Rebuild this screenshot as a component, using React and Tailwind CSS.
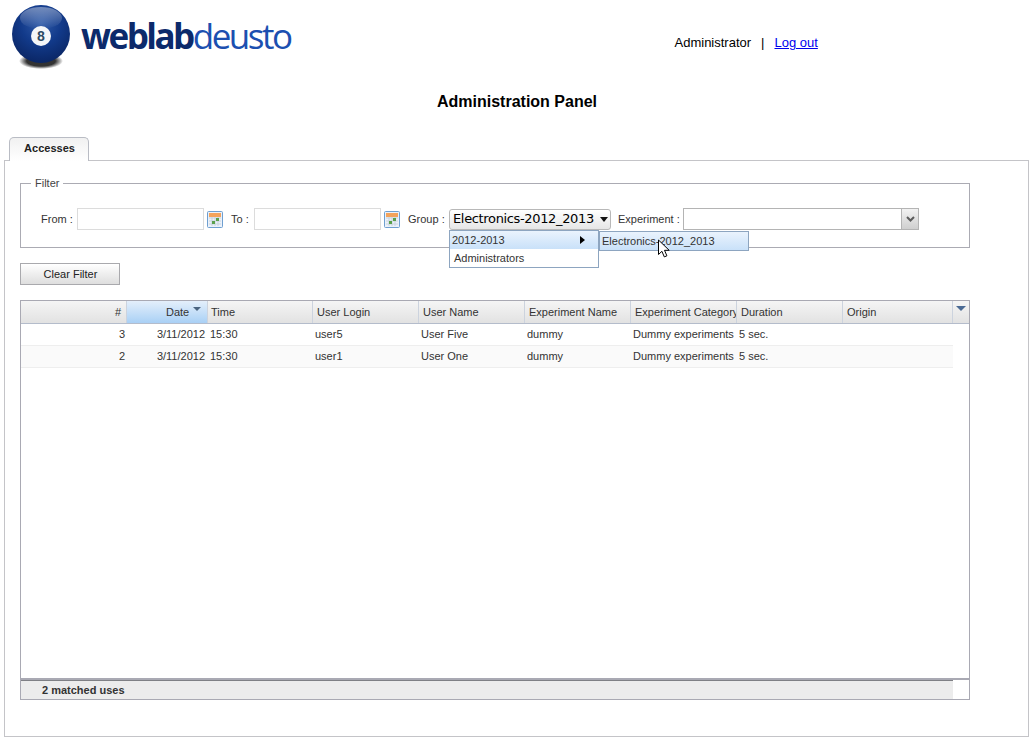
import React from "react";

const cols = "grid-cols-[106px_81px_105px_106px_106px_106px_106px_106px_110px]";

function Ball() {
  return (
    <svg width="60" height="64" viewBox="0 0 60 64" className="shrink-0">
      <defs>
        <radialGradient id="b" cx="50%" cy="32%" r="70%">
          <stop offset="0" stopColor="#2f5aa8" />
          <stop offset="0.5" stopColor="#123a8a" />
          <stop offset="1" stopColor="#0a2563" />
        </radialGradient>
        <radialGradient id="s" cx="50%" cy="50%" r="50%">
          <stop offset="0.65" stopColor="#000" stopOpacity="0.8" />
          <stop offset="1" stopColor="#000" stopOpacity="0" />
        </radialGradient>
        <linearGradient id="h" x1="0" y1="0" x2="0" y2="1">
          <stop offset="0" stopColor="#fff" stopOpacity="0.4" />
          <stop offset="1" stopColor="#fff" stopOpacity="0" />
        </linearGradient>
      </defs>
      <ellipse cx="29" cy="56" rx="22" ry="8" fill="url(#s)" />
      <circle cx="29" cy="29" r="29" fill="url(#b)" />
      <ellipse cx="29" cy="13" rx="21" ry="11" fill="url(#h)" />
      <circle cx="29" cy="31" r="10" fill="#f4f6f8" />
      <text x="29" y="36" textAnchor="middle" fontSize="14" fontWeight="700" fontFamily="Liberation Mono, monospace" fill="#2c4a63">8</text>
    </svg>
  );
}

function Cal() {
  return (
    <svg width="16" height="17" viewBox="0 0 16 17" className="shrink-0">
      <rect x="0.5" y="0.5" width="15" height="16" rx="1" fill="#eaf1fa" stroke="#6f9fd0" />
      <rect x="2" y="2" width="12" height="4" fill="#f3a35c" />
      <path d="M2 7h12M2 10h12M2 13h12M5 6v9M8 6v9M11 6v9" stroke="#c9d3dc" strokeWidth="1" />
      <rect x="9" y="7" width="3" height="3" fill="#5aa04c" />
      <rect x="5" y="10" width="3" height="3" fill="#5aa04c" />
    </svg>
  );
}

function Th({ children, right, active }) {
  return (
    <div
      className={`relative h-[22px] border-r border-[#ccd3de] flex items-center overflow-hidden whitespace-nowrap px-1 ${right ? "justify-end" : ""} ${
        active ? "bg-gradient-to-b from-[#e4effb] to-[#a9d0f5]" : "bg-gradient-to-b from-[#f5f5f5] to-[#e2e2e2]"
      }`}
    >
      {children}
    </div>
  );
}

function Row({ cells, alt }) {
  return (
    <div className={`grid ${cols} h-[22px] items-center border-b border-[#eeeeee] whitespace-nowrap ${alt ? "bg-[#fafafa]" : "bg-white"}`}>
      <div className="text-right pr-[2px]">{cells[0]}</div>
      <div className="text-right pr-[3px]">{cells[1]}</div>
      <div className="pl-[2px]">{cells[2]}</div>
      <div className="pl-[2px]">{cells[3]}</div>
      <div className="pl-[2px]">{cells[4]}</div>
      <div className="pl-[2px]">{cells[5]}</div>
      <div className="pl-[2px] overflow-hidden">{cells[6]}</div>
      <div className="pl-[2px]">{cells[7]}</div>
      <div />
    </div>
  );
}

export default function App() {
  return (
    <div className="w-[1036px] h-[750px] overflow-hidden bg-white text-black font-['Liberation_Sans',Arial,sans-serif]">
      <header className="h-[86px] flex items-start">
        <div className="ml-[12px] mt-[5px] flex items-start">
          <Ball />
          <div className="ml-[9px] mt-[9px] text-[35px] leading-[44px] tracking-[-2.5px] font-['Open_Sans',sans-serif]">
            <span className="font-bold text-[#0c2a6b]">weblab</span>
            <span className="text-[#1c4fb0]">deusto</span>
          </div>
        </div>
        <div className="ml-[384px] mt-[35px] text-[13px] leading-[15px] flex">
          <span>Administrator</span>
          <span className="ml-[10px]">|</span>
          <a href="#" className="ml-[10px] text-[#0000ee] underline">Log out</a>
        </div>
      </header>

      <h1 className="text-center text-[16px] leading-[18px] font-bold h-[18px] mt-[7px] pr-[2px]">Administration Panel</h1>

      <div className="ml-[9px] mt-[26px] w-[80px] h-[24px] relative z-10 border border-b-0 border-[#b9bcc4] rounded-t-[5px] bg-gradient-to-b from-[#f1f1f1] to-white text-[11px] font-bold text-[#222] flex items-center justify-center pb-[2px] pl-[1px]">
        Accesses
      </div>

      <main className="relative ml-[4px] -mt-px w-[1025px] h-[577px] border border-[#c4c4c8] pl-[15px] pt-[17px] text-[11px] text-[#333]">
        <fieldset className="w-[950px] h-[70px] border border-[#ababb3] pl-[10px] m-0">
          <legend className="px-[4px] text-[11px] leading-[10px] h-[10px] text-[#444]">Filter</legend>
          <div className="flex items-center mt-[19px] h-[24px]">
            <span className="ml-[10px] w-[36px] text-[11px]">From :</span>
            <div className="w-[127px] h-[22px] border border-[#dcdcdc] bg-white" />
            <span className="ml-[3px]"><Cal /></span>
            <span className="ml-[8px] w-[23px]">To :</span>
            <div className="w-[127px] h-[22px] border border-[#dcdcdc] bg-white" />
            <span className="ml-[3px]"><Cal /></span>
            <span className="ml-[8px] w-[41px]">Group :</span>
            <div className="w-[162px] h-[21px] border border-[#b8b8b8] rounded-[3px] bg-gradient-to-b from-white to-[#e6e6e6] flex items-center pl-[3px] text-[13px] text-black font-['DejaVu_Sans',sans-serif] tracking-[-0.35px]">
              <span className="whitespace-nowrap">Electronics-2012_2013</span>
              <span className="ml-[6px] w-0 h-0 border-x-[4px] border-x-transparent border-t-[5px] border-t-[#111]" />
            </div>
            <span className="ml-[7px] w-[65px]">Experiment :</span>
            <div className="w-[236px] h-[22px] border border-[#b4b4b4] bg-white flex justify-end">
              <div className="w-[17px] h-full border-l border-[#b4b4b4] bg-gradient-to-b from-[#f2f2f2] to-[#cfcfcf] flex items-center justify-center">
                <svg width="9" height="6" viewBox="0 0 9 6"><path d="M1 1l3.5 3.5L8 1" fill="none" stroke="#5c5c5c" strokeWidth="2" /></svg>
              </div>
            </div>
          </div>
        </fieldset>

        <button className="block mt-[15px] w-[100px] h-[22px] pl-[1px] border border-[#a9a9ad] bg-gradient-to-b from-white to-[#dedede] text-[11px] text-[#222]">
          Clear Filter
        </button>

        <div className="mt-[15px] w-[950px] h-[400px] border border-[#a9a9b3] flex flex-col">
          <div className="flex h-[22px] border-b border-[#b4bccb] box-content shrink-0">
            <div className={`grid ${cols} w-[932px] text-[#333]`}>
              <Th right><span className="pr-px">#</span></Th>
              <Th active>
                <span className="ml-[35px]">Date</span>
                <span className="ml-[4px] mb-[7px] w-0 h-0 border-x-[4px] border-x-transparent border-t-[4px] border-t-[#4a6480]" />
              </Th>
              <Th><span className="-ml-px">Time</span></Th>
              <Th>User Login</Th>
              <Th>User Name</Th>
              <Th>Experiment Name</Th>
              <Th>Experiment Category</Th>
              <Th>Duration</Th>
              <Th>Origin</Th>
            </div>
            <div className="flex-1 bg-gradient-to-b from-[#f5f5f5] to-[#e2e2e2] flex justify-center pt-[5px]">
              <span className="w-0 h-0 border-x-[5px] border-x-transparent border-t-[5px] border-t-[#4a6a94]" />
            </div>
          </div>
          <div className="flex-1 w-[932px]">
            <Row cells={["3", "3/11/2012", "15:30", "user5", "User Five", "dummy", "Dummy experiments", "5 sec."]} />
            <Row alt cells={["2", "3/11/2012", "15:30", "user1", "User One", "dummy", "Dummy experiments", "5 sec."]} />
          </div>
          <div className="h-[21px] shrink-0 border-t-2 border-[#a9a9b3] w-full flex">
            <div className="w-[932px] border-t border-[#7f8085] bg-[#ececec] pl-[21px] pt-[1px] font-bold text-[#333] flex items-center">2 matched uses</div>
          </div>
        </div>

        <div className="absolute left-[444px] top-[69px] w-[150px] h-[38px] border border-[#8da5c0] bg-white z-20 text-[#333]">
          <div className="h-[18px] flex items-center justify-between pl-[2px] pr-[13px] bg-gradient-to-b from-[#eaf3fd] to-[#c9e1f9]">
            <span>2012-2013</span>
            <span className="w-0 h-0 border-y-[4px] border-y-transparent border-l-[5px] border-l-black" />
          </div>
          <div className="h-[18px] flex items-center pl-[4px]">Administrators</div>
        </div>
        <div className="absolute left-[594px] top-[70px] w-[150px] h-[20px] border border-[#8da5c0] bg-gradient-to-b from-[#eaf3fd] to-[#c9e1f9] z-20 flex items-center pl-[2px] text-[#333]">
          Electronics-2012_2013
        </div>
        <svg width="14" height="20" viewBox="0 0 14 20" className="absolute left-[652px] top-[78px] z-30">
          <path d="M1.5 1v14.5l3.4-3.2 2.4 5.6 2.6-1.1-2.4-5.5h4.7z" fill="#fff" stroke="#000" strokeWidth="1" />
        </svg>
      </main>
    </div>
  );
}
